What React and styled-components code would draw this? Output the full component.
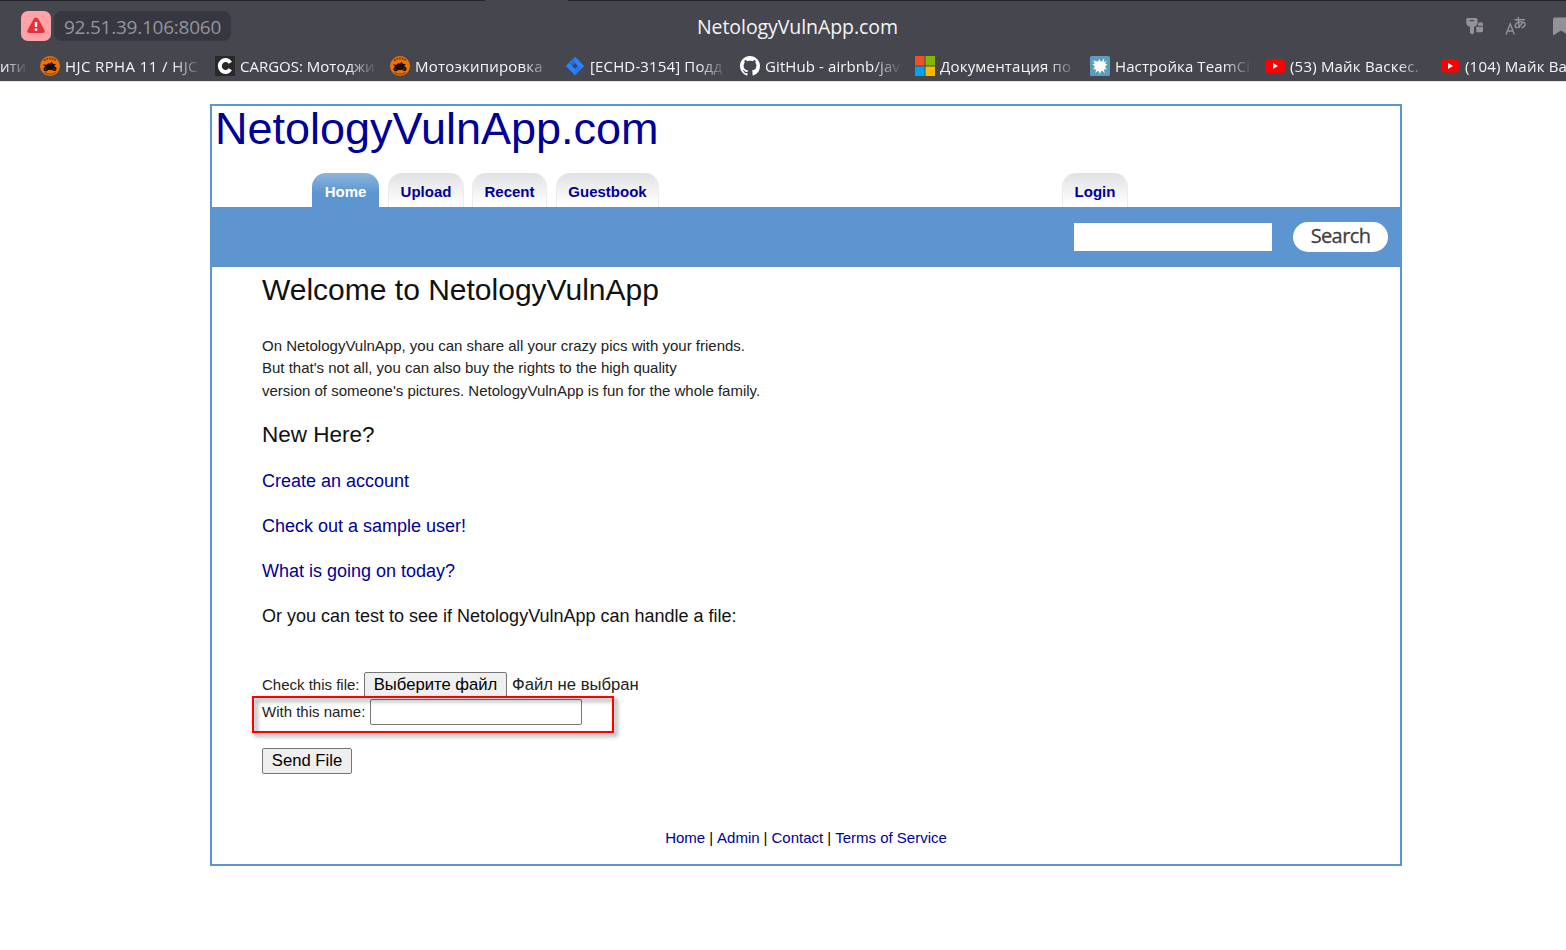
import React from "react";
import styled, { createGlobalStyle } from "styled-components";

const Global = createGlobalStyle`
  * { box-sizing: border-box; }
  body { margin: 0; background: #fff; overflow: hidden; font-family: "Liberation Sans", Arial, sans-serif; }
  a { color: #000099; text-decoration: none; }
`;

const Page = styled.div`
  width: 1566px;
  height: 950px;
  overflow: hidden;
`;

const Chrome = styled.header`
  height: 82px;
  background: #46464f;
  border-bottom: 1px solid #e4e4e6;
  font-family: "Open Sans", "Noto Sans", sans-serif;
  overflow: hidden;
`;

const TabEdge = styled.div`
  display: flex;
  justify-content: space-between;
  height: 1px;
`;

const TabEdgePart = styled.div`
  width: ${(p) => p.$w}px;
  background: #24242d;
`;

const AddressRow = styled.div`
  display: grid;
  grid-template-columns: 697px 1fr auto;
  align-items: center;
  height: 50px;
`;

const AddressGroup = styled.div`
  display: flex;
  gap: 3px;
  padding-left: 21px;
`;

const Warning = styled.div`
  width: 30px;
  height: 30px;
  border-radius: 7px;
  background: #ffa3a9;
`;

const Address = styled.div`
  width: 177px;
  height: 30px;
  padding-left: 10px;
  border-radius: 8px;
  background: #363740;
  color: #95959b;
  font-size: 19px;
  line-height: 32px;
  letter-spacing: -0.24px;
  white-space: nowrap;
`;

const PageTitle = styled.div`
  padding-top: 2px;
  color: #f5f5f6;
  font-size: 19.5px;
  line-height: 32px;
  letter-spacing: -0.07px;
`;

const Actions = styled.div`
  display: flex;
  align-items: center;
  height: 30px;
`;

const Bookmarks = styled.nav`
  display: flex;
  height: 30px;
`;

const CutBookmark = styled.div`
  flex: 0 0 40px;
  color: #f4f4f5;
  font-size: 15px;
  line-height: 30px;
  white-space: nowrap;
  mask-image: linear-gradient(to right, #000 4px, transparent 28px);
`;

const Bookmark = styled.div`
  display: flex;
  flex: 0 0 175px;
  align-items: center;
  gap: 5px;
`;

const BookmarkText = styled.div`
  width: 145px;
  color: #f6f6f7;
  font-size: 15px;
  line-height: 30px;
  letter-spacing: ${(p) => p.$ls}px;
  white-space: nowrap;
  mask-image: linear-gradient(to right, #000 108px, transparent 137px);
`;

const Site = styled.main`
  width: 1192px;
  height: 762px;
  margin: 22px 0 0 210px;
  border: 2px solid #5c95d0;
`;

const SiteTitle = styled.h1`
  height: 67px;
  margin: 0;
  padding-left: 3px;
  color: #000099;
  font-size: 45px;
  font-weight: 400;
  line-height: 45px;
`;

const Tabs = styled.nav`
  display: flex;
  height: 34px;
  padding-left: 100px;
`;

const Tab = styled.a`
  width: ${(p) => p.$w}px;
  height: 34px;
  margin-right: ${(p) => p.$gap || 0}px;
  border: solid ${(p) => (p.$active ? "transparent" : "#ececee")};
  border-width: ${(p) => (p.$active ? "0" : "0 1px")};
  border-radius: 14px 14px 0 0;
  background: ${(p) => (p.$active ? "linear-gradient(#8db4de, #5c95d0 60%)" : "linear-gradient(#e0e1e3, #fefefe 90%)")};
  && { color: ${(p) => (p.$active ? "#fff" : "#000099")}; }
  font-size: 15px;
  font-weight: 700;
  line-height: 37px;
  text-align: center;
`;

const SearchBar = styled.div`
  display: flex;
  align-items: center;
  justify-content: flex-end;
  gap: 21px;
  height: 60px;
  padding-right: 12px;
  background: #5c95d0;
`;

const SearchInput = styled.input`
  width: 198px;
  height: 28px;
  padding: 0;
  border: 0;
  background: #fff;
`;

const SearchButton = styled.button`
  width: 95px;
  height: 30px;
  padding: 0 0 3px;
  border: 0;
  border-radius: 15px;
  background: #fff;
  color: #3f3f3f;
  font: 400 20px/27px "Open Sans", sans-serif;
  letter-spacing: -0.6px;
  -webkit-text-stroke: 0.3px #3f3f3f;
`;

const Content = styled.section`
  padding-left: 50px;
  color: #111;
`;

const Heading = styled.h2`
  margin: 0;
  color: #111;
  font-size: 30px;
  font-weight: 400;
  line-height: 45px;
`;

const Intro = styled.p`
  margin: 22.5px 0 0;
  color: #222;
  font-size: 15px;
  line-height: 22.5px;
`;

const SubHeading = styled.h3`
  margin: 16px 0 0;
  font-size: 22.5px;
  font-weight: 400;
  line-height: 34px;
`;

const Line = styled.p`
  margin: 0 0 22.5px;
  font-size: 18px;
  line-height: 22.5px;
`;

const Lines = styled.div`
  padding-top: 18px;
`;

const Form = styled.form`
  position: relative;
  padding-top: 21px;
  font-size: 15px;
`;

const FormRow = styled.div`
  display: flex;
  align-items: center;
  gap: 5px;
  height: 27px;
  color: #222;
`;

const Label = styled.label`
  width: ${(p) => p.$w}px;
  white-space: nowrap;
`;

const Button = styled.button`
  width: ${(p) => p.$w}px;
  height: 26px;
  padding: 0;
  border: 1px solid #767676;
  border-radius: 2px;
  background: #efefef;
  color: #000;
  font: 16.67px/22px "Liberation Sans", Arial, sans-serif;
  white-space: nowrap;
`;

const FileState = styled.span`
  font-size: 16.67px;
`;

const NameInput = styled.input`
  width: 212px;
  height: 26px;
  border: 1px solid #767676;
  border-radius: 2px;
`;

const Submit = styled.div`
  padding-top: 23px;
`;

const Highlight = styled.div`
  position: absolute;
  top: 46px;
  left: -10px;
  width: 362px;
  height: 37px;
  border: 2px solid #fe0000;
  filter: drop-shadow(3px 3px 2px rgba(0, 0, 0, 0.5));
  pointer-events: none;
`;

const Footer = styled.footer`
  display: flex;
  justify-content: center;
  gap: 4px;
  padding-top: 53px;
  font-size: 15px;
  line-height: 22px;
`;

const AlertIcon = () => (
  <svg width="30" height="30" viewBox="0 0 30 30">
    <path d="M15 6.500c1.200 0 1.800.8 2.300 1.600l5.900 10.400c1.200 2.200.5 3.500-1.700 3.500h-13c-2.200 0-2.900-1.300-1.700-3.500l5.900-10.400C13.200 7.300 13.800 6.500 15 6.500Z" fill="#e72e3b" />
    <path d="M13.800 11h2.400v5h-2.400zM13.800 17.500h2.400v2.200h-2.400z" fill="#fff" />
  </svg>
);

const MotoIcon = () => (
  <svg width="20" height="20" viewBox="0 0 20 20">
    <circle cx="10" cy="10" r="10" fill="#ee7203" />
    <path d="M4 4.500Q10 .3 16 4.500" fill="none" stroke="#7a3c08" strokeWidth="2" strokeDasharray="1.700 1" />
    <path d="m3 8.500 3.500.3L8.500 7l1.500.8 1.500-2 1.500 2 3 .7-2 1.500 1.500 1c2.300 1.700.6 5-2 3.900l-1-.9H8c-1.300 2.300-4.800 1.500-4.600-1.200L5 10.500z" fill="#160f0b" />
    <circle cx="5.700" cy="13" r=".6" fill="#ee7203" />
    <circle cx="14" cy="13" r=".6" fill="#ee7203" />
    <path d="M4.500 16.500q5.500 3.300 11 0" fill="none" stroke="#7a3c08" />
  </svg>
);

const CargosIcon = () => (
  <svg width="20" height="20" viewBox="0 0 20 20">
    <path fill="#29292b" d="M0 0h20v20H0z" />
    <path d="M15.300 6.700A5.700 6 0 1 0 15.300 13.300" fill="none" stroke="#fff" strokeWidth="4" />
  </svg>
);

const JiraIcon = () => (
  <svg width="20" height="20" viewBox="0 0 20 20">
    <path d="M10 .8 19.200 10 10 19.200.8 10z" fill="#2684ff" />
    <path d="M10 .8v6.300L7.100 10 4 6.800z" fill="#1a70ee" />
    <path d="M10 19.200v-6.300l2.900-2.900 3.100 3.200z" fill="#1f78f5" />
    <path d="m10 7.100 2.900 2.900-2.900 2.900L7.100 10z" fill="#46464f" />
  </svg>
);

const GithubIcon = () => (
  <svg width="20" height="20" viewBox="0 0 16 16">
    <path fill="#fff" d="M8 0C3.580 0 0 3.580 0 8c0 3.540 2.290 6.530 5.470 7.590.4.070.55-.17.55-.38 0-.19-.01-.82-.01-1.490-2.010.37-2.530-.49-2.690-.94-.09-.23-.48-.94-.82-1.130-.28-.15-.68-.52-.01-.53.63-.01 1.080.58 1.230.82.72 1.210 1.870.87 2.330.66.070-.52.28-.87.51-1.070-1.780-.2-3.640-.89-3.640-3.950 0-.87.31-1.590.82-2.150-.08-.2-.36-1.020.08-2.120 0 0 .67-.21 2.200.82.64-.18 1.320-.27 2-.27s1.360.09 2 .27c1.530-1.040 2.200-.82 2.200-.82.44 1.100.16 1.920.08 2.120.51.56.82 1.270.82 2.150 0 3.070-1.870 3.750-3.650 3.950.29.25.54.73.54 1.480 0 1.070-.01 1.930-.01 2.200 0 .21.15.46.55.38A8 8 0 0 0 16 8c0-4.420-3.580-8-8-8" />
  </svg>
);

const MicrosoftIcon = () => (
  <svg width="20" height="20" viewBox="0 0 20 20">
    <path fill="#f25022" d="M0 0h9.500v9.500H0z" />
    <path fill="#7fba00" d="M10.500 0H20v9.500h-9.500z" />
    <path fill="#00a4ef" d="M0 10.500h9.500V20H0z" />
    <path fill="#ffb900" d="M10.500 10.500H20V20h-9.500z" />
  </svg>
);

const SplashIcon = () => (
  <svg width="20" height="20" viewBox="0 0 20 20">
    <rect width="20" height="20" rx="1.500" fill="#5a9dbd" />
    <path fill="#fff" d="m7 5.500 1.500-.3.500-2.500 1.300 2.500 1.700.2 2.300-3.400-.5 4 3-.8-2 2.300 2.500 1-2 1.600v1.500l2 2-2.800-.5-.5 1.200.8 3-2.500-2.500-1.500.7-1 2.800-.8-2.800-1.500-.4-2.200 2 .8-3-1.300-1-2.200.5 2-2.200-.3-1.700L2.200 8l2.600-.3L3.200 4.200z" />
  </svg>
);

const YoutubeIcon = ({ small }) => (
  <svg width="20" height="20" viewBox="0 0 20 20">
    <rect x={small ? 1 : 0} y={small ? 3.500 : 3} width={small ? 18 : 20} height={small ? 13 : 14} rx="3.500" fill="#f00" />
    <path fill="#fff" d="M8 7v6l5-3z" />
  </svg>
);

const ToolIcons = () => (
  <svg width="108" height="30" viewBox="0 0 108 30">
    <g fill="#929297">
      <path d="M9.500 7h8.500q1.500 0 1.500 1.500v3q0 3.300-3.500 4.300v6.200l-1.800 1.600-2.200-1.600v-6.200q-3.800-1-3.800-4.300v-3Q8.200 7 9.500 7Z" />
      <path d="M11.500 9h4.500v1.200h-4.500z" fill="#46464f" />
      <path d="M18.300 15.700h6.700v4q0 1.600-1.600 1.600h-5.100zM20 14.700v-1.700q.3-1.700 2-1.700h1q2 0 2 2v1.400z" />
      <path d="M97 6.500h14v18l-8-5-8 5v-16q0-2 2-2z" />
    </g>
    <g fill="none" stroke="#929297" strokeWidth="1.400">
      <path d="m48 23.500 4.200-10.500 4.200 10.500m-7-3.500h5.700" />
      <path d="M56.500 8.700h10.500M60.500 6c-.4 3.500 0 7 1 11M64.800 10.500c-1 3-4 6.500-6.500 6-2.500-.5-1-5 3-5.500 4-.6 6.500 1 5.500 3.200-.5 1.500-1.500 2.200-3.200 2.500" />
    </g>
  </svg>
);

const bookmarks = [
  { text: "HJC RPHA 11 / HJC", icon: MotoIcon, ls: 0.4 },
  { text: "CARGOS: Мотоджи", icon: CargosIcon, ls: 0 },
  { text: "Мотоэкипировка", icon: MotoIcon, ls: 0.2 },
  { text: "[ECHD-3154] Подд", icon: JiraIcon, ls: 0.15 },
  { text: "GitHub - airbnb/jav", icon: GithubIcon, ls: 0.1 },
  { text: "Документация по", icon: MicrosoftIcon, ls: 0.2 },
  { text: "Настройка TeamCi", icon: SplashIcon, ls: 0.1 },
  { text: "(53) Майк Васкес.", icon: YoutubeIcon, ls: 0.2 },
  { text: "(104) Майк Ва", icon: () => <YoutubeIcon small />, ls: 0.2 },
];

export default function App() {
  return (
    <Page>
      <Global />
      <Chrome>
        <TabEdge>
          <TabEdgePart $w={485} />
          <TabEdgePart $w={998} />
        </TabEdge>
        <AddressRow>
          <AddressGroup>
            <Warning><AlertIcon /></Warning>
            <Address>92.51.39.106:8060</Address>
          </AddressGroup>
          <PageTitle>NetologyVulnApp.com</PageTitle>
          <Actions><ToolIcons /></Actions>
        </AddressRow>
        <Bookmarks>
          <CutBookmark>ити</CutBookmark>
          {bookmarks.map(({ text, icon: Icon, ls }) => (
            <Bookmark key={text}>
              <Icon />
              <BookmarkText $ls={ls}>{text}</BookmarkText>
            </Bookmark>
          ))}
        </Bookmarks>
      </Chrome>
      <Site>
        <SiteTitle>NetologyVulnApp.com</SiteTitle>
        <Tabs>
          <Tab $w={67} $gap={9} $active>Home</Tab>
          <Tab $w={76} $gap={8}>Upload</Tab>
          <Tab $w={75} $gap={9}>Recent</Tab>
          <Tab $w={103} $gap={403}>Guestbook</Tab>
          <Tab $w={66}>Login</Tab>
        </Tabs>
        <SearchBar>
          <SearchInput />
          <SearchButton>Search</SearchButton>
        </SearchBar>
        <Content>
          <Heading>Welcome to NetologyVulnApp</Heading>
          <Intro>
            On NetologyVulnApp, you can share all your crazy pics with your friends.<br />
            But that's not all, you can also buy the rights to the high quality<br />
            version of someone's pictures. NetologyVulnApp is fun for the whole family.
          </Intro>
          <SubHeading>New Here?</SubHeading>
          <Lines>
            <Line><a>Create an account</a></Line>
            <Line><a>Check out a sample user!</a></Line>
            <Line><a>What is going on today?</a></Line>
            <Line>Or you can test to see if NetologyVulnApp can handle a file:</Line>
          </Lines>
          <Form>
            <FormRow>
              <Label $w={97}>Check this file:</Label>
              <Button type="button" $w={143}>Выберите файл</Button>
              <FileState>Файл не выбран</FileState>
            </FormRow>
            <FormRow>
              <Label $w={103}>With this name:</Label>
              <NameInput />
            </FormRow>
            <Submit><Button type="button" $w={90}>Send File</Button></Submit>
            <Highlight />
          </Form>
        </Content>
        <Footer>
          <a>Home</a><span>|</span><a>Admin</a><span>|</span><a>Contact</a><span>|</span><a>Terms of Service</a>
        </Footer>
      </Site>
    </Page>
  );
}
